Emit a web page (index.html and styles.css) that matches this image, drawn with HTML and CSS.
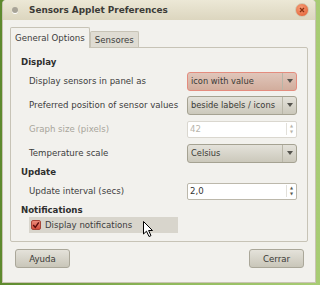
FILE: index.html
```html
<!DOCTYPE html>
<html lang="en">
<head>
    <meta charset="UTF-8">
    <title>Sensors Applet Preferences</title>
    <link rel="stylesheet" href="styles.css">
</head>
<body>
    <div class="window">
        <div class="titlebar">
            <span class="menu-dot"></span>
            <span class="title">Sensors Applet Preferences</span>
            <span class="close">
                <svg width="8" height="8" viewBox="0 0 8 8"><path d="M2 2 L6 6 M6 2 L2 6" stroke="#8a3010" stroke-width="1.3"/></svg>
            </span>
        </div>
        <div class="content">
            <div class="tabs">
                <div class="tab active">General Options</div>
                <div class="tab">Sensores</div>
            </div>
            <div class="panel">
                <div class="section">Display</div>
                <div class="row">
                    <span class="label">Display sensors in panel as</span>
                    <div class="combo focused"><span>icon with value</span><span class="arrow"></span></div>
                </div>
                <div class="row">
                    <span class="label">Preferred position of sensor values</span>
                    <div class="combo"><span>beside labels / icons</span><span class="arrow"></span></div>
                </div>
                <div class="row">
                    <span class="label disabled">Graph size (pixels)</span>
                    <div class="spin disabled"><span>42</span><span class="spin-btns"><i>▲</i><i>▼</i></span></div>
                </div>
                <div class="row">
                    <span class="label">Temperature scale</span>
                    <div class="combo"><span>Celsius</span><span class="arrow"></span></div>
                </div>
                <div class="section">Update</div>
                <div class="row">
                    <span class="label">Update interval (secs)</span>
                    <div class="spin"><span>2,0</span><span class="spin-btns"><i>▲</i><i>▼</i></span></div>
                </div>
                <div class="section">Notifications</div>
                <div class="check-row">
                    <span class="checkbox">
                        <svg width="8" height="8" viewBox="0 0 8 8"><path d="M1.2 4 L3.3 6.4 L6.8 1.3" fill="none" stroke="#5a0c0c" stroke-width="1.5"/></svg>
                    </span>
                    <span>Display notifications</span>
                    <svg class="cursor" width="12" height="17" viewBox="0 0 12 17"><path d="M0.5 0.5 L0.5 13 L3.5 10.2 L6 15.5 L8 14.6 L5.6 9.5 L9.5 9.5 Z" fill="#fff" stroke="#000" stroke-width="1"/></svg>
                </div>
            </div>
            <div class="buttons">
                <button class="btn">Ayuda</button>
                <button class="btn">Cerrar</button>
            </div>
        </div>
    </div>
</body>
</html>
```
FILE: styles.css
```css
body {
    margin: 0;
    width: 320px;
    height: 285px;
    overflow: hidden;
    background: linear-gradient(90deg, #5e8a2e 0%, #8fb85a 50%, #a8cc74 100%);
    font-family: "DejaVu Sans", sans-serif;
    font-size: 8.6px;
    color: #3c3c3c;
}
.window {
    margin-left: 2px;
    width: 314px;
    height: 283px;
    background: #f2f1ed;
    border-radius: 4px 4px 0 0;
    box-sizing: border-box;
    border: 1px solid #c9c4b2;
    border-top: none;
    display: flex;
    flex-direction: column;
}
.titlebar {
    height: 20px;
    display: flex;
    align-items: center;
    background: linear-gradient(#ece8d6, #dcd6bf);
    border-radius: 4px 4px 0 0;
    padding: 0 6px 0 9px;
}
.menu-dot {
    width: 6px;
    height: 6px;
    border-radius: 50%;
    background: #a8a498;
    box-shadow: 0 1px 0 #fff;
}
.title {
    margin-left: 11px;
    font-weight: bold;
    font-size: 8.9px;
    color: #3c3b37;
    flex: 1;
}
.close {
    width: 12px;
    height: 12px;
    border-radius: 50%;
    background: radial-gradient(circle at 40% 35%, #f6a07a, #e2572b);
    border: 1px solid #d3c9b0;
    display: flex;
    align-items: center;
    justify-content: center;
}
.content {
    flex: 1;
    padding: 7px 7px 0 7px;
    display: flex;
    flex-direction: column;
}
.tabs {
    display: flex;
    align-items: flex-end;
}
.tab {
    padding: 3px 4px 2px;
    border: 1px solid #c7c3b6;
    border-bottom: none;
    border-radius: 2px 2px 0 0;
    background: #dfdcd3;
    color: #3c3c3c;
}
.tab.active {
    background: #f2f1ed;
    padding: 5px 4px 5px;
    margin-bottom: -1px;
    position: relative;
}
.panel {
    border: 1px solid #c7c3b6;
    border-radius: 0 2px 2px 2px;
    padding: 7px 10px 7px 10px;
    height: 195px;
    box-sizing: border-box;
}
.section {
    font-weight: bold;
    color: #2e2e2e;
    height: 14px;
    line-height: 14px;
}
.row {
    display: flex;
    align-items: center;
    justify-content: space-between;
    padding-left: 8px;
    height: 24px;
    white-space: nowrap;
}
.label.disabled {
    color: #a8a59b;
}
.combo {
    width: 110px;
    height: 19px;
    box-sizing: border-box;
    border: 1px solid #a5a292;
    border-radius: 3px;
    background: linear-gradient(#e4e2da, #cbc8bb);
    display: flex;
    align-items: center;
    padding-left: 3px;
    color: #3a3a36;
    overflow: hidden;
}
.combo span:first-child {
    flex: 1;
    font-size: 8.3px;
    overflow: hidden;
}
.combo.focused {
    border-color: #e48c7e;
    background: linear-gradient(#e0c6ba, #d2ad9d);
}
.arrow {
    width: 13px;
    flex-shrink: 0;
    height: 17px;
    border-left: 1px solid #b9b6a8;
    display: flex;
    align-items: center;
    justify-content: center;
}
.arrow::after {
    content: "";
    border-left: 3px solid transparent;
    border-right: 3px solid transparent;
    border-top: 4px solid #55544e;
}
.spin {
    width: 110px;
    height: 17px;
    box-sizing: border-box;
    border: 1px solid #bcb8ab;
    border-radius: 2px;
    background: #fff;
    display: flex;
    align-items: center;
    padding-left: 2px;
    color: #333;
}
.spin span:first-child {
    flex: 1;
}
.spin-btns {
    width: 9px;
    display: flex;
    flex-direction: column;
    align-items: center;
    border-left: 1px solid #e2e0da;
}
.spin-btns i {
    font-style: normal;
    font-size: 4px;
    line-height: 6px;
    color: #5a5a55;
}
.spin.disabled {
    border-color: #dad7cf;
    color: #b8b5ab;
}
.spin.disabled .spin-btns i {
    color: #b8b5ab;
}
.check-row {
    margin-left: 8px;
    width: 149px;
    height: 16px;
    background: #d8d5cc;
    display: flex;
    align-items: center;
    gap: 4px;
    padding-left: 2px;
    box-sizing: border-box;
    position: relative;
}
.checkbox {
    width: 8px;
    height: 8px;
    border-radius: 2px;
    background: linear-gradient(#ec8a7a, #d4503e);
    border: 1px solid #a8463a;
    display: flex;
    align-items: center;
    justify-content: center;
}
.cursor {
    position: absolute;
    left: 114px;
    top: 4px;
}
.buttons {
    display: flex;
    justify-content: space-between;
    padding: 7px 4px 0 5px;
}
.btn {
    width: 55px;
    height: 19px;
    border: 1px solid #aaa799;
    border-radius: 3px;
    background: linear-gradient(#e4e2da, #c9c6b9);
    font-family: "DejaVu Sans", sans-serif;
    font-size: 8.6px;
    color: #3a3a36;
    padding: 0;
}
```
